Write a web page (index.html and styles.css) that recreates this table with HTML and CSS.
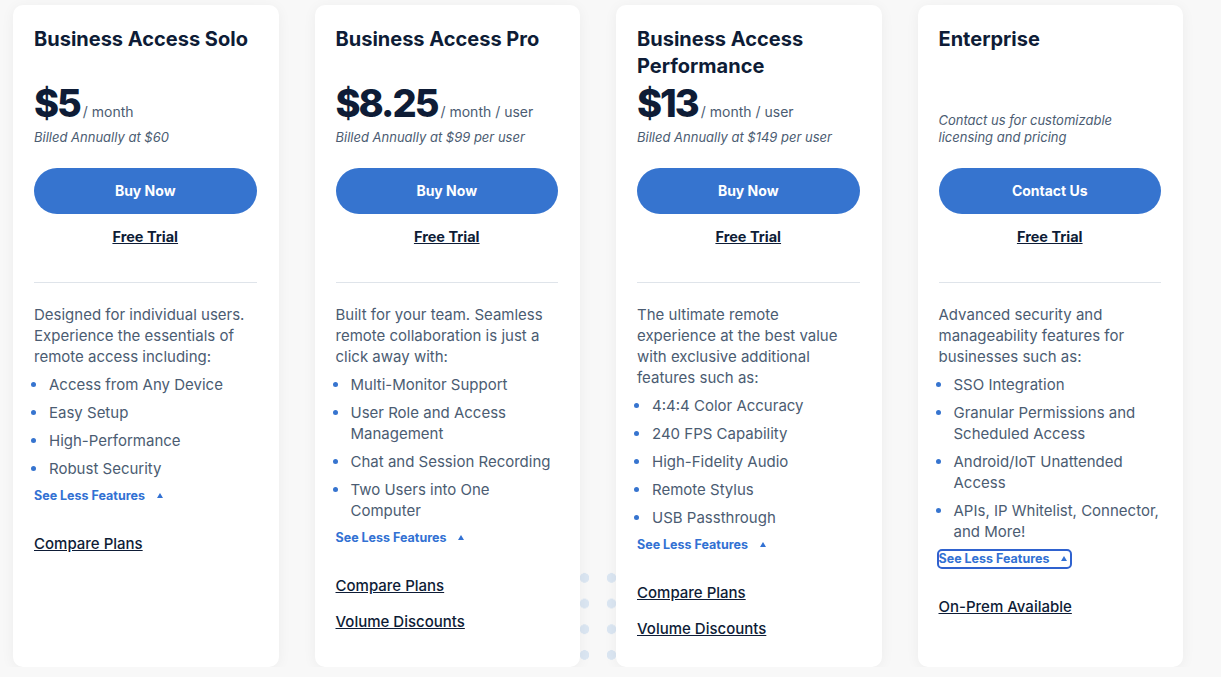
FILE: index.html
```html
<!DOCTYPE html>
<html lang="en">
<head>
  <meta charset="UTF-8" />
  <meta name="viewport" content="width=device-width, initial-scale=1.0"/>
  <title>Pricing</title>
  <link rel="stylesheet" href="styles.css">
</head>
<body>
  <div class="pricing">
    <div class="dots"></div>

    <div class="plan">
      <div class="plan-head">
        <h2 class="plan-name">Business Access Solo</h2>
        <div class="plan-price">
          <div class="price"><span class="amount">$5</span><span class="unit">/ month</span></div>
          <p class="billed">Billed Annually at $60</p>
        </div>
      </div>
      <a class="btn" href="#">Buy Now</a>
      <a class="trial" href="#">Free Trial</a>
      <hr class="divider">
      <p class="desc">Designed for individual users. Experience the essentials of remote access including:</p>
      <ul class="features">
        <li>Access from Any Device</li>
        <li>Easy Setup</li>
        <li>High-Performance</li>
        <li>Robust Security</li>
      </ul>
      <a class="toggle" href="#">See Less Features</a>
      <div class="links">
        <a href="#">Compare Plans</a>
      </div>
    </div>

    <div class="plan">
      <div class="plan-head">
        <h2 class="plan-name">Business Access Pro</h2>
        <div class="plan-price">
          <div class="price"><span class="amount">$8.25</span><span class="unit">/ month / user</span></div>
          <p class="billed">Billed Annually at $99 per user</p>
        </div>
      </div>
      <a class="btn" href="#">Buy Now</a>
      <a class="trial" href="#">Free Trial</a>
      <hr class="divider">
      <p class="desc">Built for your team. Seamless remote collaboration is just a click away with:</p>
      <ul class="features">
        <li>Multi-Monitor Support</li>
        <li>User Role and Access Management</li>
        <li>Chat and Session Recording</li>
        <li>Two Users into One Computer</li>
      </ul>
      <a class="toggle" href="#">See Less Features</a>
      <div class="links">
        <a href="#">Compare Plans</a>
        <a href="#">Volume Discounts</a>
      </div>
    </div>

    <div class="plan">
      <div class="plan-head">
        <h2 class="plan-name">Business Access Performance</h2>
        <div class="plan-price">
          <div class="price"><span class="amount">$13</span><span class="unit">/ month / user</span></div>
          <p class="billed">Billed Annually at $149 per user</p>
        </div>
      </div>
      <a class="btn" href="#">Buy Now</a>
      <a class="trial" href="#">Free Trial</a>
      <hr class="divider">
      <p class="desc">The ultimate remote experience at the best value with exclusive additional features such as:</p>
      <ul class="features">
        <li>4:4:4 Color Accuracy</li>
        <li>240 FPS Capability</li>
        <li>High-Fidelity Audio</li>
        <li>Remote Stylus</li>
        <li>USB Passthrough</li>
      </ul>
      <a class="toggle" href="#">See Less Features</a>
      <div class="links">
        <a href="#">Compare Plans</a>
        <a href="#">Volume Discounts</a>
      </div>
    </div>

    <div class="plan">
      <div class="plan-head">
        <h2 class="plan-name">Enterprise</h2>
        <div class="plan-price">
          <p class="billed">Contact us for customizable licensing and pricing</p>
        </div>
      </div>
      <a class="btn" href="#">Contact Us</a>
      <a class="trial" href="#">Free Trial</a>
      <hr class="divider">
      <p class="desc">Advanced security and manageability features for businesses such as:</p>
      <ul class="features">
        <li>SSO Integration</li>
        <li>Granular Permissions and Scheduled Access</li>
        <li>Android/IoT Unattended Access</li>
        <li>APIs, IP Whitelist, Connector, and More!</li>
      </ul>
      <a class="toggle focused" href="#">See Less Features</a>
      <div class="links">
        <a href="#">On-Prem Available</a>
      </div>
    </div>
  </div>
</body>
</html>
```

FILE: styles.css
```css
body {
  margin: 0;
  background: #f8f8f8;
  font-family: Inter, 'Open Sans', sans-serif;
  color: #4b5c72;
}
.pricing {
  position: relative;
  display: grid;
  grid-template-columns: repeat(4, 1fr);
  gap: 36px;
  width: 1170px;
  height: 662px;
  margin: 5px 0 0 13px;
}
/* dot pattern peeking out between the middle cards */
.dots {
  position: absolute;
  left: 557.5px;
  top: 560px;
  width: 90px;
  height: 104px;
  background-image: radial-gradient(circle, #dbe6f2 4.5px, transparent 5px);
  background-size: 27px 25.7px;
  z-index: 0;
}
.plan {
  position: relative;
  z-index: 1;
  display: flex;
  flex-direction: column;
  background: #fff;
  border-radius: 10px;
  box-shadow: 0 2px 14px rgba(0, 0, 0, 0.05);
  padding: 21px 22px 0 21px;
}
.plan-head {
  display: flex;
  flex-direction: column;
  justify-content: space-between;
  height: 120px;
  margin-bottom: 22px;
}
.plan-name {
  margin: 0;
  font-size: 20px;
  line-height: 27px;
  font-weight: 700;
  color: #0e1c36;
}
.price {
  display: flex;
  align-items: baseline;
  color: #0e1c36;
}
.amount {
  font-size: 38px;
  line-height: 40px;
  font-weight: 800;
  letter-spacing: -2px;
}
.unit {
  font-size: 14px;
  color: #4b5c72;
  margin-left: 3px;
}
.billed {
  margin: 6px 0 0;
  font-size: 13px;
  line-height: 17px;
  font-style: italic;
  color: #4b5c72;
}
.btn {
  display: block;
  height: 46px;
  line-height: 46px;
  border-radius: 23px;
  background: #3674cf;
  color: #fff;
  text-align: center;
  font-size: 14px;
  font-weight: 700;
  text-decoration: none;
}
.trial {
  align-self: center;
  margin-top: 14px;
  font-size: 14.5px;
  line-height: 18px;
  font-weight: 700;
  color: #0e1c36;
}
.divider {
  width: 100%;
  margin: 36px 0 21px;
  border: none;
  border-top: 1px solid #dfe4ea;
}
.desc {
  margin: 0;
  font-size: 15px;
  line-height: 21px;
}
.features {
  list-style: none;
  margin: 0 0 0 -3px;
  padding: 0;
}
.features li {
  display: flex;
  margin-top: 7px;
  font-size: 15px;
  line-height: 21px;
}
.features li::before {
  content: '';
  flex-shrink: 0;
  width: 5px;
  height: 5px;
  margin: 8px 13px 0 0;
  border-radius: 50%;
  background: #3674cf;
}
.toggle {
  align-self: flex-start;
  margin-top: 9px;
  font-size: 12.5px;
  line-height: 16px;
  font-weight: 700;
  color: #3271d3;
  text-decoration: none;
}
.toggle::after {
  content: '';
  display: inline-block;
  margin: 0 0 2px 12px;
  border-left: 3.5px solid transparent;
  border-right: 3.5px solid transparent;
  border-bottom: 5px solid #3271d3;
}
.toggle.focused {
  outline: 2px solid #2f62cf;
  border-radius: 3px;
  padding-right: 3px;
}
.links {
  display: flex;
  flex-direction: column;
  align-items: flex-start;
  gap: 15px;
  margin-top: 29px;
}
.links a {
  font-size: 15px;
  line-height: 21px;
  font-weight: 500;
  color: #0e1c36;
}
```
